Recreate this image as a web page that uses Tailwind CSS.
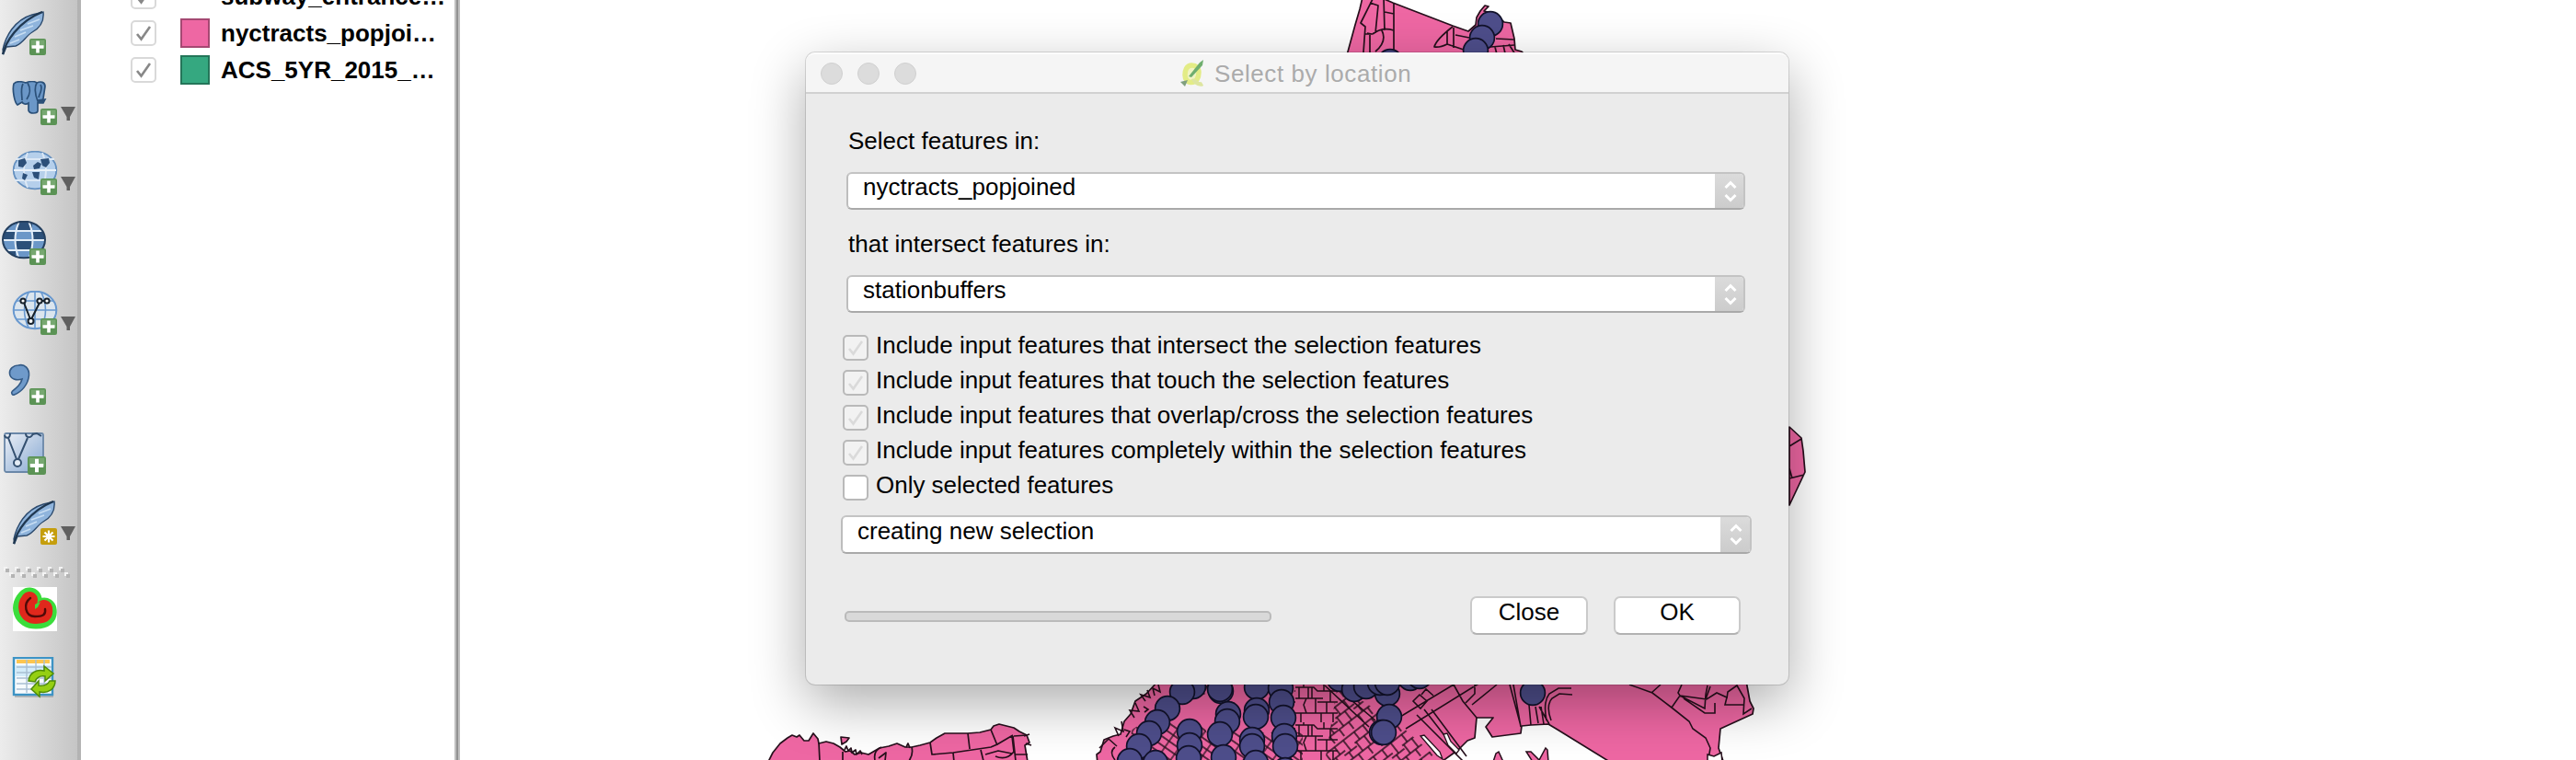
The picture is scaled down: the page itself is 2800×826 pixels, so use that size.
<!DOCTYPE html>
<html lang="en">
<head>
<meta charset="utf-8">
<title>Select by location</title>
<script src="https://cdn.jsdelivr.net/npm/@tailwindcss/browser@4"></script>
</head>
<body class="relative flex h-[826px] w-[2800px] overflow-hidden bg-white font-['Liberation_Sans',Arial,sans-serif] text-[26px] leading-[30px] text-black">

<svg width="0" height="0" class="absolute">
  <defs>
    <symbol id="plus" viewBox="0 0 18 18"><rect width="18" height="18" rx="2" fill="#5b9355"/><rect x="1.5" y="1.5" width="15" height="8" fill="#8ab583" opacity=".6"/><path d="M9 2.5v13M2.5 9h13" stroke="#fff" stroke-width="3.6"/></symbol>
    <symbol id="feather" viewBox="0 0 48 48"><path d="M2 42C5 28 14 10 34 4L46 1C47 10 43 18 34 23C27 27 24 35 16 38L6 39L3 46Z" fill="#8fb4dc" stroke="#2c4a6d" stroke-width="1.4"/><path d="M2 47C5 34 18 12 45 1" fill="none" stroke="#203851" stroke-width="2.4"/><path d="M10 35l10-4M15 28l12-5M21 21l14-5M29 14l13-5" stroke="#c7ddf2" stroke-width="1.800"/></symbol>
    <symbol id="arrow" viewBox="0 0 16 15"><path d="M0 0h16L10 11v4H6.500v-4z" fill="#606060"/></symbol>
    <symbol id="tick" viewBox="0 0 28 28"><path d="M7 15l4.500 5.500L21 7" fill="none" stroke="currentColor" stroke-width="2.600"/></symbol>
    <symbol id="updown" viewBox="0 0 14 24"><path d="M1.500 8L7 2.500 12.500 8M1.500 16L7 21.500 12.500 16" fill="none" stroke="#fff" stroke-width="3"/></symbol>
  </defs>
</svg>

<aside class="flex w-[88px] shrink-0 flex-col border-r-4 border-[#b3b3b3] bg-linear-to-r from-[#ececec] to-[#c5c5c5] pt-3">
  <div class="flex flex-col gap-7">
    <svg width="84" height="48" viewBox="0 12 84 48"><use href="#feather" x="1" y="12" width="48" height="48"/><use href="#plus" x="32" y="42" width="18" height="18"/></svg>
    <svg width="84" height="48" viewBox="0 88 84 48"><g stroke="#2b5078" stroke-width="1.700" fill="#6b97c7"><path d="M15 91c4-4 10-2 13-1c5-2 9-2 12 0c4-2 9-1 9 4l-2 13c-1 3-3 4-6 4v9c0 4-9 4-10 0v-8c-3 2-6 1-7-1l-5 3c-3-2-6-16-4-23z"/><path d="M25 91c-3 6-1 12-1 18M30 90c4 7 3 12-1 18M40 90c-3 5-2 12 1 20M44 92c3 5-1 9-2 14" fill="none"/><path d="M41 109l8-1-2 4h-6" fill="#2b5078"/></g><use href="#plus" x="44" y="118" width="18" height="18"/><use href="#arrow" x="66" y="116" width="16" height="15"/></svg>
    <svg width="84" height="48" viewBox="0 164 84 48"><ellipse cx="38" cy="185" rx="23.300" ry="20.300" fill="#b5cfeb" stroke="#6490c0" stroke-width="1.800"/><path d="M30 166q-8 19 0 38M46 166q8 19 0 38M17 173h42M16 196h42" stroke="#dce8f5" stroke-width="1.800" fill="none"/><path d="M20 174l7-2 2 5-4 5-5-1zM36 180l5-4 4 2-2 5-6 1zM44 173l9-1 1 5-4 5-4-2zM35 187h8l-1 8-5-2zM25 188l5 2-3 6-3-2z" fill="#2c4f79"/><path d="M15 185h46" stroke="#eaf2fa" stroke-width="2"/><use href="#plus" x="44" y="194" width="18" height="18"/><use href="#arrow" x="66" y="192" width="16" height="15"/></svg>
    <svg width="84" height="48" viewBox="0 240 84 48"><clipPath id="gc"><ellipse cx="26" cy="260.500" rx="23" ry="19.500"/></clipPath><g clip-path="url(#gc)"><rect x="2" y="240" width="48" height="42" fill="#6b97c8"/><path d="M18 240h17v11H18zM2 251h14v10H2zM36 251h14v10H36zM17 262h18v10H17zM2 271h15v12H2zM36 271h14v12H36z" fill="#2c5079"/><path d="M2 251h48M2 261h48M2 272h48M21 240q-9 20 0 42M31 240q9 20 0 42" stroke="#e4eef8" stroke-width="2" fill="none"/></g><ellipse cx="26" cy="260.500" rx="23" ry="19.800" fill="none" stroke="#243f5e" stroke-width="2"/><use href="#plus" x="32" y="270" width="18" height="18"/></svg>
    <svg width="84" height="48" viewBox="0 316 84 48"><g fill="none" stroke="#6898cf" stroke-width="1.600"><ellipse cx="38" cy="337" rx="23.300" ry="20.300" fill="#dbe5ee" stroke-width="2"/><path d="M15 337h46M18 327h40M18 347h40M38 317v40M31 318q-9 19 0 38M45 318q9 19 0 38"/></g><g fill="#fff" stroke="#17212b" stroke-width="2"><path d="M26 329l7 18M43 329l-9 18M45 327h4" fill="none"/><circle cx="25" cy="327" r="2.600"/><circle cx="43" cy="327" r="2.600"/><circle cx="51" cy="327" r="2.600"/><circle cx="33.500" cy="349" r="3"/></g><use href="#plus" x="44" y="346" width="18" height="18"/><use href="#arrow" x="66" y="344" width="16" height="15"/></svg>
    <svg width="84" height="48" viewBox="0 392 84 48"><path d="M20 397c7-2 12 4 11.500 11c-1 10-8 18-16 21c-2 1-4-2-2-4c5-4 9-7 10.500-13c-6 2-13 0-13.500-6c-.500-5 4-9 9.500-9z" fill="#6f9aca" stroke="#345a85" stroke-width="1.600"/><use href="#plus" x="32" y="422" width="18" height="18"/></svg>
    <svg width="84" height="48" viewBox="0 468 84 48"><defs><linearGradient id="vg" x2="1" y2="1"><stop stop-color="#ebeff6"/><stop offset="1" stop-color="#86a8d2"/></linearGradient></defs><rect x="5" y="471" width="42" height="42" rx="2" fill="url(#vg)" stroke="#6a87a8" stroke-width="1.800"/><g fill="#e4ecf5" stroke="#345070" stroke-width="2"><path d="M9 476l9 23M30 476l-10 23M35 472l5-1 5 3" fill="none"/><path d="M5 473c1 4 6 4 6-2M28 471c0 5 6 6 8 0" fill="none"/><circle cx="19" cy="503" r="4"/></g><use href="#plus" x="30" y="496" width="20" height="20"/></svg>
    <svg width="84" height="48" viewBox="0 544 84 48"><use href="#feather" x="13" y="544" width="48" height="48"/><rect x="44" y="574" width="18" height="18" rx="2" fill="#c59e0d"/><path d="M53 576.500v13M46.500 583h13M48.500 578.500l9 9M57.500 578.500l-9 9" stroke="#fff" stroke-width="2.200"/><use href="#arrow" x="66" y="572" width="16" height="15"/></svg>
  </div>
  <svg class="mt-6 mb-2.5" width="84" height="12" viewBox="0 616 84 12"><g fill="#f4f4f4"><path d="M4 616h4v4h-4zM16 616h4v4h-4zM28 616h4v4h-4zM40 616h4v4h-4zM52 616h4v4h-4zM64 616h4v4h-4zM10 622h4v4h-4zM22 622h4v4h-4zM34 622h4v4h-4zM46 622h4v4h-4zM58 622h4v4h-4zM70 622h4v4h-4z"/></g><g fill="#b4b4b4"><path d="M6 618h4v4h-4zM18 618h4v4h-4zM30 618h4v4h-4zM42 618h4v4h-4zM54 618h4v4h-4zM66 618h4v4h-4zM12 624h4v4h-4zM24 624h4v4h-4zM36 624h4v4h-4zM48 624h4v4h-4zM60 624h4v4h-4zM72 624h4v4h-4z"/></g></svg>
  <div class="flex flex-col gap-7">
    <svg width="84" height="48" viewBox="14 638 84 48" class="ml-3.5"><path d="M14 638h48v48H14z" fill="#fff"/><clipPath id="bc"><path d="M14 638h48v48H14z"/></clipPath><g clip-path="url(#bc)" fill="none" stroke-linecap="round"><path d="M32 652c-8 7-5 18 7 18c8 0 10-2 9-7" stroke="#3bdd3b" stroke-width="27"/><path d="M32 652c-5 6-4 17 7 17c9 0 10-2 9-8" stroke="#e0281c" stroke-width="18"/><path d="M38 662v-5l6-3-3 6z" fill="#3bdd3b"/><path d="M33 650c-8 6-6 20 5 20c9 0 12-2 11-8" stroke="#4e0a08" stroke-width="2.400"/></g></svg>
    <svg width="84" height="48" viewBox="0 714 84 48"><path d="M16 755h42v3H16z" fill="#999" opacity=".6"/><rect x="15" y="715" width="42" height="40" fill="#f6fafd" stroke="#3d93c4" stroke-width="2.400"/><path d="M17 723h38v12H17z" fill="#d3ecfa"/><path d="M18 717h36v4H18z" fill="#fdc64f"/><path d="M18 725h38M18 731h38M18 737h38M18 743h38M18 749h38M29 717v36M39 717v36M48 717v36" stroke="#a9bfd3" stroke-width="1.400"/><g fill="#95cf12" stroke="#4f8a0a" stroke-width="1.500"><path d="M31 740c1-9 9-13 17-11v-5l10 8-9 8v-5c-6-1-9 1-11 6z"/><path d="M60 740c0 9-8 14-17 12v5l-9-8 8-9v5c7 1 10-1 12-5z"/></g></svg>
  </div>
</aside>

<section class="flex w-[406px] shrink-0 flex-col font-bold">
  <div class="-mt-6 flex h-10 items-center">
    <span class="ml-[54px] size-7 rounded-[5px] border-2 border-[#d9d9d9] text-[#888]"><svg class="-m-0.5" width="28" height="28"><use href="#tick"/></svg></span>
    <span class="ml-[38px] size-2 rounded-full bg-[#777]"></span>
    <span class="ml-[24px] whitespace-nowrap">subway_entrance…</span>
  </div>
  <div class="flex h-10 items-center">
    <span class="ml-[54px] size-7 rounded-[5px] border-2 border-[#d9d9d9] text-[#888]"><svg class="-m-0.5" width="28" height="28"><use href="#tick"/></svg></span>
    <span class="ml-[26px] size-8 border-2 border-[#a54872] bg-[#ee67a3]"></span>
    <span class="ml-3 whitespace-nowrap">nyctracts_popjoi…</span>
  </div>
  <div class="flex h-10 items-center">
    <span class="ml-[54px] size-7 rounded-[5px] border-2 border-[#d9d9d9] text-[#888]"><svg class="-m-0.5" width="28" height="28"><use href="#tick"/></svg></span>
    <span class="ml-[26px] size-8 border-2 border-[#247559] bg-[#35a880]"></span>
    <span class="ml-3 whitespace-nowrap">ACS_5YR_2015_…</span>
  </div>
</section>
<div class="w-1.5 shrink-0 border-x-2 border-[#bfbfbf] bg-[#929292]"></div>

<main class="min-w-0 flex-1">
  <svg width="2300" height="826" viewBox="500 0 2300 826">
    <defs>
      <pattern id="blocks" width="46" height="41" patternUnits="userSpaceOnUse" patternTransform="translate(1408 744)"><path d="M0 3h20l4 4h22M0 15h30M24 19h22M0 31h46M4 3v12M9 -6v9M14 3v12M18 3v12M31 -4v11M38 7v12M12 15l-3 7 3 9M22 15v16M34 19v12M28 31v12M6 31v10M41 31v10" stroke="#26101c" stroke-width="1.500" fill="none"/></pattern>
      <pattern id="slant" width="39" height="34" patternUnits="userSpaceOnUse" patternTransform="rotate(-38)"><path d="M0 3h39M0 13h26M22 17h17M0 25h39M7 3v10M19 3v10M31 3v14M13 13v12M2 13v12M28 17v8M9 25v12M22 25v12M35 25v12" stroke="#26101c" stroke-width="1.500" fill="none"/></pattern>
      <pattern id="strips" width="26" height="24" patternUnits="userSpaceOnUse" patternTransform="rotate(35)"><path d="M0 3h26M0 11h26M0 19h26M8 0v24M21 0v24" stroke="#26101c" stroke-width="1.300" fill="none"/></pattern>
    </defs>
    <g fill="#ee67a3" stroke="#26101c" stroke-width="1.700" stroke-linejoin="round">
      <path d="M1481-3L1478 10 1473 27 1464 60H1658L1654 56 1647 54 1646 42 1642 25 1635 24 1622 14 1613 12 1618 7 1614 6 1609 12 1605 19 1604 27 1596 34 1579 28 1514 3 1500-3Z"/>
      <path d="M1493-3l-14 28 5 4-2 28M1489 3l9 3-3 30M1483 37l9 0M1489 38v20M1504-3l1 36M1515 3v55M1505 13l10 2M1492 37q10-8 23-4M1502 33q6 12-7 23M1486 36l5 1M1579 29q-18 14-20 22q6 1 14-3l18 6M1573 34v14M1580 30v22M1582 38l15 3M1626 42l20 1M1620 51l26-2M1625 51l2 8M1634 49l2 9M1640 48l7 11" fill="none"/>
      <path d="M1945 464L1958 476 1960 490 1962 513 1945 549V464ZM1945 485L1958 477M1945 520l16-4M1945 509l3 11"/>
      <path d="M835 828L840 818 848 808 856 802 861 799 866 801 869 799 874 805 879 805 884 797 889 803 890 808 898 806 906 808 913 812 919 817 924 816 929 820 936 818 944 820 956 813 966 811 975 808 984 812 991 812 1000 810 1011 807 1018 802 1027 797 1052 797 1065 796 1077 793 1080 789 1086 787 1102 791 1108 795 1116 799 1119 807 1114 810 1117 828Z"/>
      <path d="M914 801l9 1-3 4-5 3z"/>
      <path d="M890 807l1 20M916 817v10M951 826q-2-10 7-14M955 824l8-6-1 9M991 812q2 8-3 15M1011 807l2 13 23-2 41-6 7-3 17-10M1052 797l2 17M1036 818l1 10M1066 815l3 12M1077 793l7 17M1082 822q12 5 20-5l-2-17M1071 820l14-4 15 3M1102 800l14-1M1103 820l14 0M1101 800l3 27M918 815l2-4 2 5 3-3 1 5 4-3 1 5 4-4 2 4M985 812l2-4 2 5M1113 800l6-2M1115 808l6 2" fill="none"/>
      <path d="M1193 830l-1-10 4-3 4-13 10-4 8-2 4-14 7-8 5-14 12-8 13-14H1898L1902 762 1906 770 1905 776 1870 792 1868 813 1874 830H1753L1693 793 1683 787 1664 788 1654 789 1653 797 1622 801 1615 790 1623 780 1605 780 1603 802 1595 805 1585 815 1578 820 1564 830Z"/>
    </g>
    <path d="M1408 740h46v88h-54z" fill="url(#blocks)"/>
    <path d="M1454 744l70 46 34 30-8 8h-110z" fill="url(#slant)"/>
    <path d="M1230 793l26-15 30 12 22-22-15-22 27-6 6 88h-98z" fill="url(#strips)"/>
    <path d="M1334 796h82v32h-82z" fill="url(#strips)"/>
    <path d="M1285 782l17-24 15-7 8 20 1 20-13 8-6-13z" fill="#ee67a3"/>
    <g fill="none" stroke="#26101c" stroke-width="1.600">
      <path d="M1195 813l10-10 9 8M1212 826q-7-9 0-14M1222 793l6 2-4 6M1243 768l5 3-4 3M1216 800l-4-9 9 4-2-11M1233 780l-5-8 10 1-4-9M1245 762l-5-7 10 3-3-8M1255 756l-2-8 8 4-2-8"/>
      <path d="M1440 745l48 45M1450 745l45 38M1512 785L1600 732M1528 792L1612 740M1536 762l7-7 8 7-7 8zM1545 755l5-6 8 7M1540 777l50 50M1548 771l35 45M1556 771l38 51M1580 744l10 18 15 18M1600 766L1627 744M1603 744v10l-10 10"/>
      <path d="M1641 744l12 45M1645 744l8 46M1662 766l2 22M1669 768l3 18M1675 768l3 19M1681 783q-4-20 3-29l10-6h14M1686 783q-6-16 1-24l8-5 14 1M1673 768l11 19"/>
      <path d="M1771 744l25 9 21 16 19 15 4 8 14 10 5 11-3 18M1795 753l10-9M1817 769l9-13 27 14 1-15 2-10M1828 744l-4 9 2 3 29 4 11-7 11 5-2 8h20M1830 759l23 16h11V764M1854 760l5-14M1877 759l1-7 10-7 8 14-1 17 9-6"/>
    </g>
    <path d="M1544 800l4-1 17 18 3 8-6-4z" fill="#fff" stroke="#26101c" stroke-width="1.300"/>
    <path d="M1569 798l4-1 4 9 9 9-3 4-9-9z" fill="#fff" stroke="#26101c" stroke-width="1.300"/>
    <path d="M1623 828l3-9 3-2 5 11zM1659 817l5 0 11 11h-9zM1680 813l2 2 1 13h-11z" fill="#ee67a3" stroke="#26101c" stroke-width="1.500"/>
    <path d="M1856 820l7 2 8-4 1 10h-16z" fill="#fff" stroke="#26101c" stroke-width="1.500"/>
    <g fill="#4e4e8b" stroke="#12122a" stroke-width="1.700" class="[&_circle]:[r:13.4px]">
      <circle cx="1620" cy="26" r="13"/><circle cx="1611" cy="41" r="13"/><circle cx="1604" cy="55" r="13"/><circle cx="1511" cy="67" r="13"/>
      <circle cx="1297" cy="746" r="13"/><circle cx="1285" cy="752" r="13"/><circle cx="1269" cy="770" r="13"/><circle cx="1258" cy="785" r="13"/><circle cx="1249" cy="797" r="13"/><circle cx="1238" cy="811" r="13"/><circle cx="1256" cy="829" r="13"/><circle cx="1228" cy="827" r="13"/>
      <circle cx="1327" cy="751" r="13"/><circle cx="1326" cy="749" r="13"/><circle cx="1293" cy="795" r="13"/><circle cx="1293" cy="810" r="13"/><circle cx="1292" cy="824" r="13"/>
      <circle cx="1335" cy="776" r="13"/><circle cx="1334" cy="784" r="13"/><circle cx="1326" cy="798" r="13"/><circle cx="1330" cy="823" r="13"/>
      <circle cx="1366" cy="747" r="13"/><circle cx="1366" cy="772" r="13"/><circle cx="1365" cy="779" r="13"/><circle cx="1361" cy="804" r="13"/><circle cx="1361" cy="811" r="13"/><circle cx="1365" cy="829" r="13"/>
      <circle cx="1392" cy="748" r="13"/><circle cx="1393" cy="763" r="13"/><circle cx="1395" cy="780" r="13"/><circle cx="1396" cy="800" r="13"/><circle cx="1397" cy="811" r="13"/><circle cx="1397" cy="837" r="13"/>
      <circle cx="1456" cy="738" r="13"/><circle cx="1508" cy="754" r="13"/><circle cx="1472" cy="749" r="13"/><circle cx="1485" cy="746" r="13"/><circle cx="1500" cy="742" r="13"/><circle cx="1508" cy="742" r="13"/><circle cx="1533" cy="737" r="13"/><circle cx="1543" cy="735" r="13"/>
      <circle cx="1510" cy="779" r="13"/><circle cx="1502" cy="796" r="13"/><circle cx="1504" cy="796" r="13"/><circle cx="1666" cy="753" r="13"/>
    </g>
  </svg>
</main>

<div class="absolute top-[57px] left-[876px] flex h-[687px] w-[1068px] flex-col overflow-visible rounded-[10px] bg-[#ebebeb] shadow-[0_0_0_1px_rgba(0,0,0,0.13),0_20px_60px_rgba(0,0,0,0.33)]">
  <header class="flex h-[45px] shrink-0 items-center rounded-t-[10px] border-t-2 border-b-2 border-t-[#fcfcfc] border-b-[#d1d1d1] bg-[#f5f5f5] pl-4">
    <div class="flex gap-4">
      <span class="size-6 rounded-full border border-[#d0d0d0] bg-[#dcdcdc]"></span>
      <span class="size-6 rounded-full border border-[#d0d0d0] bg-[#dcdcdc]"></span>
      <span class="size-6 rounded-full border border-[#d0d0d0] bg-[#dcdcdc]"></span>
    </div>
    <svg class="ml-[287px]" width="28" height="32" viewBox="0 0 28 32"><path d="M12.500 7c-6 0-7.500 6-7.500 10.500s3 8 6.500 8c6 0 8.500-5 8.500-10.500s-3-8-7.500-8z" fill="#f1f4c4" stroke="#e3ec86" stroke-width="5.500"/><path d="M13 24c3-2 6 6 11 3" stroke="#dde5a0" stroke-width="4.500" fill="none"/><path d="M9 19L21 4l4-3-1 6-12 13z" fill="#6fae6f"/><path d="M0 25l8-2-3 7z" fill="#7f9f7f"/></svg>
    <h1 class="mt-px ml-[9px] whitespace-nowrap tracking-[0.58px] text-[#ababab]">Select by location</h1>
  </header>

  <div class="flex flex-col pt-9">
    <label class="ml-[46px] h-[30px]">Select features in:</label>
    <div class="mt-[19px] ml-[44px] flex h-[41px] w-[977px] overflow-hidden rounded-[6px] border-2 border-t-[#c3c3c3] border-r-[#c3c3c3] border-b-[#a9a9a9] border-l-[#bdbdbd] bg-white">
      <span class="-mt-px flex-1 pl-4">nyctracts_popjoined</span>
      <span class="-my-0.5 -mr-0.5 flex w-[33px] items-center justify-center bg-linear-to-b from-[#dcdcdc] to-[#cbcbcb]"><svg width="14" height="24"><use href="#updown"/></svg></span>
    </div>
    <label class="mt-[22px] ml-[46px] h-[30px]">that intersect features in:</label>
    <div class="mt-[19px] ml-[44px] flex h-[41px] w-[977px] overflow-hidden rounded-[6px] border-2 border-t-[#c3c3c3] border-r-[#c3c3c3] border-b-[#a9a9a9] border-l-[#bdbdbd] bg-white">
      <span class="-mt-px flex-1 pl-4">stationbuffers</span>
      <span class="-my-0.5 -mr-0.5 flex w-[33px] items-center justify-center bg-linear-to-b from-[#dcdcdc] to-[#cbcbcb]"><svg width="14" height="24"><use href="#updown"/></svg></span>
    </div>

    <div class="mt-5 ml-10 flex flex-col tracking-[-0.02px]">
      <label class="flex h-[38px] gap-2"><span class="mt-1 size-7 rounded-[5px] border-2 border-[#b9b9b9] bg-[#f2f2f2] text-[#dadada]"><svg class="-m-0.5" width="28" height="28"><use href="#tick"/></svg></span><span>Include input features that intersect the selection features</span></label>
      <label class="flex h-[38px] gap-2"><span class="mt-1 size-7 rounded-[5px] border-2 border-[#b9b9b9] bg-[#f2f2f2] text-[#dadada]"><svg class="-m-0.5" width="28" height="28"><use href="#tick"/></svg></span><span>Include input features that touch the selection features</span></label>
      <label class="flex h-[38px] gap-2"><span class="mt-1 size-7 rounded-[5px] border-2 border-[#b9b9b9] bg-[#f2f2f2] text-[#dadada]"><svg class="-m-0.5" width="28" height="28"><use href="#tick"/></svg></span><span>Include input features that overlap/cross the selection features</span></label>
      <label class="flex h-[38px] gap-2"><span class="mt-1 size-7 rounded-[5px] border-2 border-[#b9b9b9] bg-[#f2f2f2] text-[#dadada]"><svg class="-m-0.5" width="28" height="28"><use href="#tick"/></svg></span><span>Include input features completely within the selection features</span></label>
      <label class="flex h-[38px] gap-2"><span class="mt-1 size-7 rounded-[5px] border-2 border-[#b9b9b9] bg-white"></span><span>Only selected features</span></label>
    </div>

    <div class="mt-[10px] ml-[38px] flex h-[42px] w-[990px] overflow-hidden rounded-[6px] border-2 border-t-[#c3c3c3] border-r-[#c3c3c3] border-b-[#a9a9a9] border-l-[#bdbdbd] bg-white">
      <span class="flex-1 pl-4">creating new selection</span>
      <span class="-my-0.5 -mr-0.5 flex w-[34px] items-center justify-center bg-linear-to-b from-[#dcdcdc] to-[#cbcbcb]"><svg width="14" height="24"><use href="#updown"/></svg></span>
    </div>

    <div class="mt-[46px] flex items-start pl-[42px]">
      <div class="mt-4 h-3 w-[464px] rounded-[5px] border-2 border-[#bababa] bg-[#d9d9d9]"></div>
      <button class="ml-[216px] flex h-[42px] w-[128px] justify-center rounded-[7px] border-2 border-[#cacaca] border-b-[#b2b2b2] bg-white">Close</button>
      <button class="ml-7 flex h-[42px] w-[138px] justify-center rounded-[7px] border-2 border-[#cacaca] border-b-[#b2b2b2] bg-white">OK</button>
    </div>
  </div>
</div>
</body>
</html>
